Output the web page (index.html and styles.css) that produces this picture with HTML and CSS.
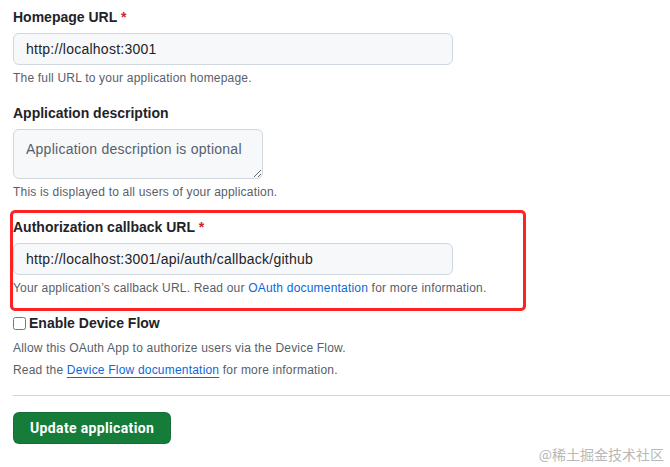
FILE: index.html
```html
<!DOCTYPE html>
<html lang="en">

<head>
    <meta charset="UTF-8">
    <meta name="viewport" content="width=device-width, initial-scale=1.0">
    <title>Update OAuth application</title>
    <link rel="stylesheet" href="styles.css">
</head>

<body>
    <form class="AppForm">
        <div class="FormGroup">
            <label class="FormLabel" for="homepage">Homepage URL <span class="Required">*</span></label>
            <input class="FormInput" type="text" id="homepage" value="http://localhost:3001">
            <p class="Note">The full URL to your application homepage.</p>
        </div>

        <div class="FormGroup">
            <label class="FormLabel" for="description">Application description</label>
            <textarea class="FormTextarea" id="description" placeholder="Application description is optional"></textarea>
            <p class="Note">This is displayed to all users of your application.</p>
        </div>

        <div class="FormGroup Highlight">
            <label class="FormLabel" for="callback">Authorization callback URL <span class="Required">*</span></label>
            <input class="FormInput" type="text" id="callback" value="http://localhost:3001/api/auth/callback/github">
            <p class="Note">Your application’s callback URL. Read our <a href="#">OAuth documentation</a> for more information.</p>
        </div>

        <div class="FormGroup">
            <label class="CheckLabel" for="deviceFlow"><input type="checkbox" id="deviceFlow">Enable Device Flow</label>
            <p class="Note">Allow this OAuth App to authorize users via the Device Flow.</p>
            <p class="Note">Read the <a class="Underlined" href="#">Device Flow documentation</a> for more information.</p>
        </div>

        <hr class="Divider">

        <button type="submit" class="PrimaryButton">Update application</button>
    </form>

    <div class="Watermark">@稀土掘金技术社区</div>
</body>

</html>
```

FILE: styles.css
```css
body {
    margin: 0;
    font-family: "Liberation Sans", Arial, sans-serif;
    font-size: 14px;
    line-height: 20px;
    color: #1f2328;
    background-color: #ffffff;
}

.AppForm {
    padding: 7px 0 0 13px;
}

.FormGroup {
    margin-bottom: 16px;
}

.FormLabel {
    display: block;
    font-weight: bold;
    margin-bottom: 6px;
}

.Required {
    color: #cf222e;
}

.FormInput,
.FormTextarea {
    display: block;
    box-sizing: border-box;
    margin: 0;
    font-family: "Liberation Sans", Arial, sans-serif;
    font-size: 14px;
    line-height: 20px;
    letter-spacing: 0.25px;
    color: #1f2328;
    background-color: #f6f8fa;
    border: 1px solid #d0d7de;
    border-radius: 6px;
    outline: none;
}

.FormInput {
    width: 440px;
    height: 32px;
    padding: 5px 12px;
}

.FormTextarea {
    width: 250px;
    height: 50px;
    padding: 9px 12px;
    resize: vertical;
}

.FormTextarea::placeholder {
    color: #57606a;
}

.Note {
    margin: 4px 0 0;
    font-size: 12px;
    line-height: 18px;
    letter-spacing: 0.2px;
    color: #57606a;
}

.CheckLabel + .Note {
    margin-top: 6px;
}

.Note a {
    color: #0969da;
    text-decoration: none;
}

.Note a.Underlined {
    text-decoration: underline;
    text-underline-offset: 3px;
}

/* red annotation box around the callback group */
.Highlight {
    position: relative;
    width: 513px;
}

.Highlight::after {
    content: "";
    position: absolute;
    left: -3px;
    top: -7px;
    right: 0;
    bottom: -14px;
    border: 3px solid #fe2222;
    border-radius: 5px;
    pointer-events: none;
}

.CheckLabel {
    display: flex;
    align-items: center;
    font-weight: bold;
}

.CheckLabel input {
    width: 13px;
    height: 13px;
    margin: 0 3px 0 0;
}

.Divider {
    margin: 16px 0;
    border: 0;
    border-top: 1px solid #d0d7de;
}

.PrimaryButton {
    height: 32px;
    padding: 5px 16px;
    font-family: Roboto, "Liberation Sans", sans-serif;
    font-size: 14px;
    font-weight: bold;
    line-height: 20px;
    letter-spacing: 0.35px;
    color: #ffffff;
    background-color: #167c39;
    border: 1px solid rgba(31, 35, 40, 0.15);
    border-radius: 6px;
    cursor: pointer;
}

.Watermark {
    position: absolute;
    right: 6px;
    bottom: 3px;
    font-family: "Noto Sans CJK SC", sans-serif;
    font-size: 14px;
    line-height: 20px;
    color: #b8b8b8;
}
```
